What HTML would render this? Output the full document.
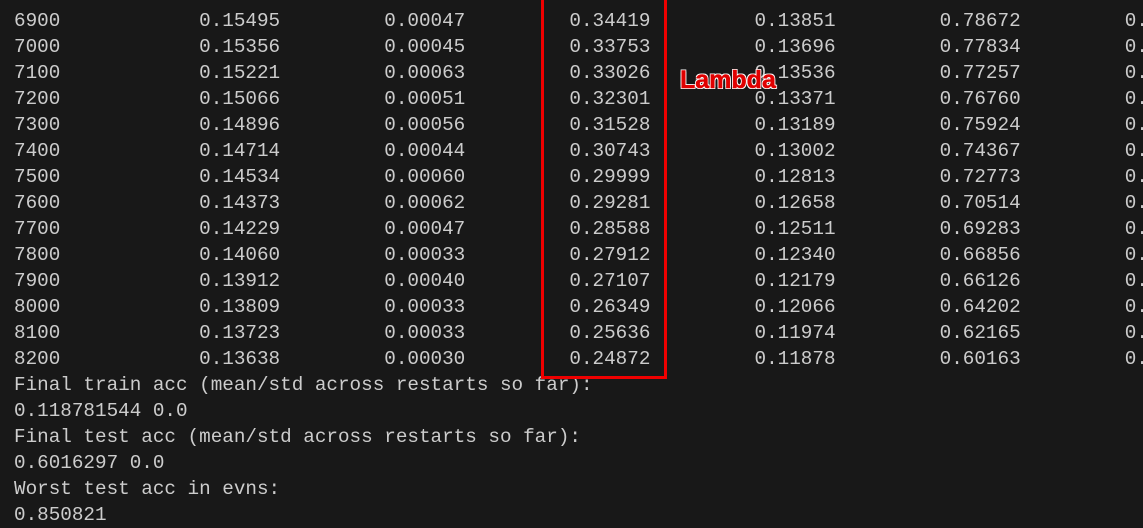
<!DOCTYPE html>
<html><head><meta charset="utf-8"><style>
html,body{margin:0;padding:0;background:#181818;width:1143px;height:526px;overflow:hidden}
pre{position:absolute;left:14px;top:-18px;margin:0;font-family:"Liberation Mono",monospace;font-size:19.3px;line-height:26px;color:#cccccc;white-space:pre}
.box{position:absolute;left:541px;top:-4px;width:120px;height:377px;border:3px solid #ee0000}
.lam{position:absolute;left:680px;top:66px;font-family:"Liberation Sans",sans-serif;font-weight:bold;font-size:25px;color:#e00000;-webkit-text-stroke:0.5px #e00000;text-shadow:1px 1px 0 #fff,-1px -1px 0 #fff,1px -1px 0 #fff,-1px 1px 0 #fff}
</style></head><body>
<pre>6800            0.15637         0.00046         0.35068         0.14020         0.79522         0.
6900            0.15495         0.00047         0.34419         0.13851         0.78672         0.
7000            0.15356         0.00045         0.33753         0.13696         0.77834         0.
7100            0.15221         0.00063         0.33026         0.13536         0.77257         0.
7200            0.15066         0.00051         0.32301         0.13371         0.76760         0.
7300            0.14896         0.00056         0.31528         0.13189         0.75924         0.
7400            0.14714         0.00044         0.30743         0.13002         0.74367         0.
7500            0.14534         0.00060         0.29999         0.12813         0.72773         0.
7600            0.14373         0.00062         0.29281         0.12658         0.70514         0.
7700            0.14229         0.00047         0.28588         0.12511         0.69283         0.
7800            0.14060         0.00033         0.27912         0.12340         0.66856         0.
7900            0.13912         0.00040         0.27107         0.12179         0.66126         0.
8000            0.13809         0.00033         0.26349         0.12066         0.64202         0.
8100            0.13723         0.00033         0.25636         0.11974         0.62165         0.
8200            0.13638         0.00030         0.24872         0.11878         0.60163         0.
Final train acc (mean/std across restarts so far):
0.118781544 0.0
Final test acc (mean/std across restarts so far):
0.6016297 0.0
Worst test acc in evns:
0.850821</pre>
<div class="box"></div>
<div class="lam">Lambda</div>
</body></html>
